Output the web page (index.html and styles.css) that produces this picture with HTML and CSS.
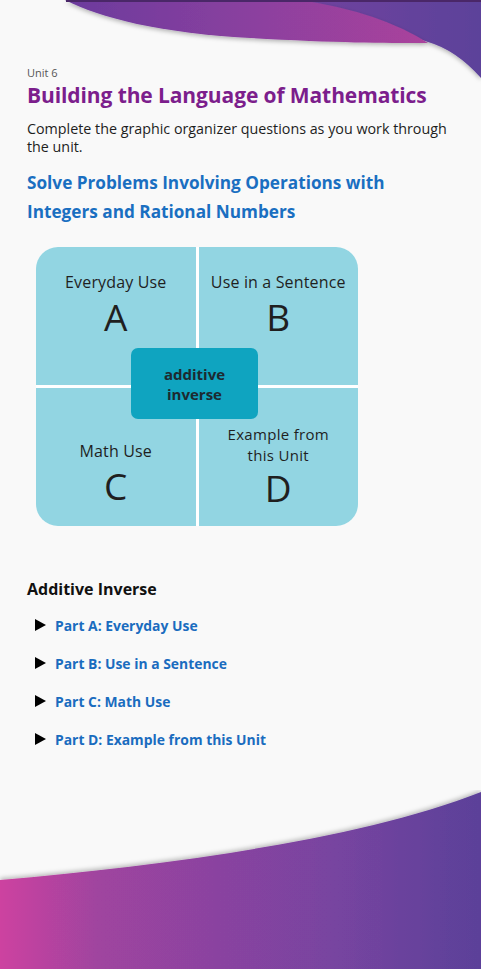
FILE: index.html
```html
<!DOCTYPE html>
<html lang="en">
<head>
<meta charset="utf-8">
<title>Building the Language of Mathematics</title>
<link rel="stylesheet" href="styles.css">
</head>
<body>
<div class="page">
  <svg class="wave-top" viewBox="0 0 481 90" width="481" height="90" aria-hidden="true">
    <defs>
      <linearGradient id="gFront" x1="0" y1="0" x2="1" y2="0">
        <stop offset="0" stop-color="#6b3a9d"/>
        <stop offset="0.55" stop-color="#8d419f"/>
        <stop offset="1" stop-color="#aa429c"/>
      </linearGradient>
      <linearGradient id="gBack" x1="0" y1="0" x2="1" y2="0">
        <stop offset="0" stop-color="#7543a0"/>
        <stop offset="1" stop-color="#5c429a"/>
      </linearGradient>
      <filter id="sh" x="-10%" y="-20%" width="120%" height="160%">
        <feDropShadow dx="0" dy="2" stdDeviation="2" flood-color="#000" flood-opacity="0.28"/>
      </filter>
    </defs>
    <path filter="url(#sh)" fill="url(#gBack)" d="M260,0 H481 V78 Q456,50 428,42 L300,0 Z"/>
    <path filter="url(#sh)" fill="url(#gFront)" d="M65,0 C100,18 160,33 250,38 S380,43 428,43 Q380,12 300,0 Z"/>
    <rect x="66" y="0" width="415" height="2" fill="#4a2768"/>
  </svg>

  <main class="content">
    <p class="unit">Unit 6</p>
    <h1 class="title">Building the Language of Mathematics</h1>
    <p class="intro">Complete the graphic organizer questions as you work through the unit.</p>
    <h2 class="subtitle">Solve Problems Involving Operations with Integers and Rational Numbers</h2>

    <div class="organizer">
      <div class="cell cell-a">
        <span class="cell-label">Everyday Use</span>
        <span class="cell-letter">A</span>
      </div>
      <div class="cell cell-b">
        <span class="cell-label">Use in a Sentence</span>
        <span class="cell-letter">B</span>
      </div>
      <div class="cell cell-c">
        <span class="cell-label">Math Use</span>
        <span class="cell-letter">C</span>
      </div>
      <div class="cell cell-d">
        <span class="cell-label cell-label-2">Example from<br>this Unit</span>
        <span class="cell-letter">D</span>
      </div>
      <div class="center-term">additive<br>inverse</div>
    </div>

    <h3 class="section-title">Additive Inverse</h3>
    <ul class="parts">
      <li class="part"><span class="arrow"></span><span class="part-link">Part A: Everyday Use</span></li>
      <li class="part"><span class="arrow"></span><span class="part-link">Part B: Use in a Sentence</span></li>
      <li class="part"><span class="arrow"></span><span class="part-link">Part C: Math Use</span></li>
      <li class="part"><span class="arrow"></span><span class="part-link">Part D: Example from this Unit</span></li>
    </ul>
  </main>

  <svg class="wave-bottom" viewBox="0 0 481 179" width="481" height="179" aria-hidden="true">
    <defs>
      <linearGradient id="gBottom" x1="0" y1="0" x2="1" y2="0">
        <stop offset="0" stop-color="#cd42a0"/>
        <stop offset="0.2" stop-color="#a0449f"/>
        <stop offset="0.45" stop-color="#8a43a0"/>
        <stop offset="0.7" stop-color="#7744a0"/>
        <stop offset="1" stop-color="#5b4199"/>
      </linearGradient>
      <filter id="shb" x="-10%" y="-20%" width="120%" height="140%">
        <feDropShadow dx="0" dy="-2" stdDeviation="2" flood-color="#000" flood-opacity="0.25"/>
      </filter>
    </defs>
    <path filter="url(#shb)" fill="url(#gBottom)" d="M0,90 C160,76 360,50 481,2 V179 H0 Z"/>
  </svg>
</div>
</body>
</html>
```

FILE: styles.css
```css
* { box-sizing: border-box; }

html, body {
  margin: 0;
  padding: 0;
  background: #f9f9f9;
}

body {
  font-family: "Open Sans", Lato, Arial, sans-serif;
  color: #222;
}

.page {
  position: relative;
  width: 481px;
  height: 969px;
  display: flex;
  flex-direction: column;
  overflow: hidden;
}

.wave-top {
  position: absolute;
  top: 0;
  left: 0;
  display: block;
}

.content {
  padding: 66px 27px 0 27px;
  flex: 1;
}

.unit {
  margin: 0;
  font-size: 11px;
  line-height: 14px;
  color: #555;
}

.title {
  margin: 2px 0 0;
  font-size: 21px;
  line-height: 26px;
  font-weight: 700;
  color: #7c1e8c;
  letter-spacing: -0.1px;
  white-space: nowrap;
}

.intro {
  margin: 12px 0 0;
  font-size: 14.3px;
  line-height: 18px;
  color: #1e1e1e;
  padding-right: 0;
}

.subtitle {
  margin: 12px 0 0;
  font-size: 17.2px;
  line-height: 29px;
  font-weight: 700;
  color: #1a6fc1;
  padding-right: 40px;
}

.organizer {
  position: relative;
  margin: 21px 0 0 9px;
  width: 322px;
  height: 279px;
  display: grid;
  grid-template-columns: 1fr 1fr;
  grid-template-rows: 138px 1fr;
  gap: 3px;
  border-radius: 22px;
  overflow: hidden;
  background: #fff;
}

.cell {
  background: #92d5e2;
  display: flex;
  flex-direction: column;
  align-items: center;
  text-align: center;
  color: #1f1f1f;
}

.cell-a, .cell-b { padding-top: 26px; }
.cell-c { padding-top: 54px; }
.cell-d { padding-top: 36px; }

.cell-label {
  font-size: 16px;
  line-height: 18px;
  letter-spacing: 0.15px;
}

.cell-label-2 {
  font-size: 15px;
  line-height: 20.5px;
  letter-spacing: 0.3px;
}

.cell-letter {
  font-size: 37px;
  line-height: 44px;
  margin-top: 4px;
}

.cell-c .cell-letter { margin-top: 4px; }
.cell-d .cell-letter { margin-top: 1px; }

.center-term {
  position: absolute;
  left: 95px;
  top: 101px;
  width: 127px;
  height: 71px;
  border-radius: 7px;
  background: #0fa4c0;
  display: flex;
  align-items: center;
  justify-content: center;
  text-align: center;
  font-size: 15px;
  line-height: 20px;
  font-weight: 700;
  color: #1d2a30;
}

.section-title {
  margin: 52px 0 0;
  font-size: 16px;
  line-height: 22px;
  font-weight: 700;
  color: #111;
}

.parts {
  list-style: none;
  margin: 6px 0 0;
  padding: 0;
}

.part {
  display: flex;
  align-items: center;
  gap: 9px;
  height: 38px;
  padding-left: 8px;
}

.arrow {
  width: 0;
  height: 0;
  border-top: 6px solid transparent;
  border-bottom: 6px solid transparent;
  border-left: 11px solid #000;
}

.part-link {
  font-size: 13.9px;
  font-weight: 700;
  color: #1a6cbf;
}

.wave-bottom {
  display: block;
  flex: none;
}
```
